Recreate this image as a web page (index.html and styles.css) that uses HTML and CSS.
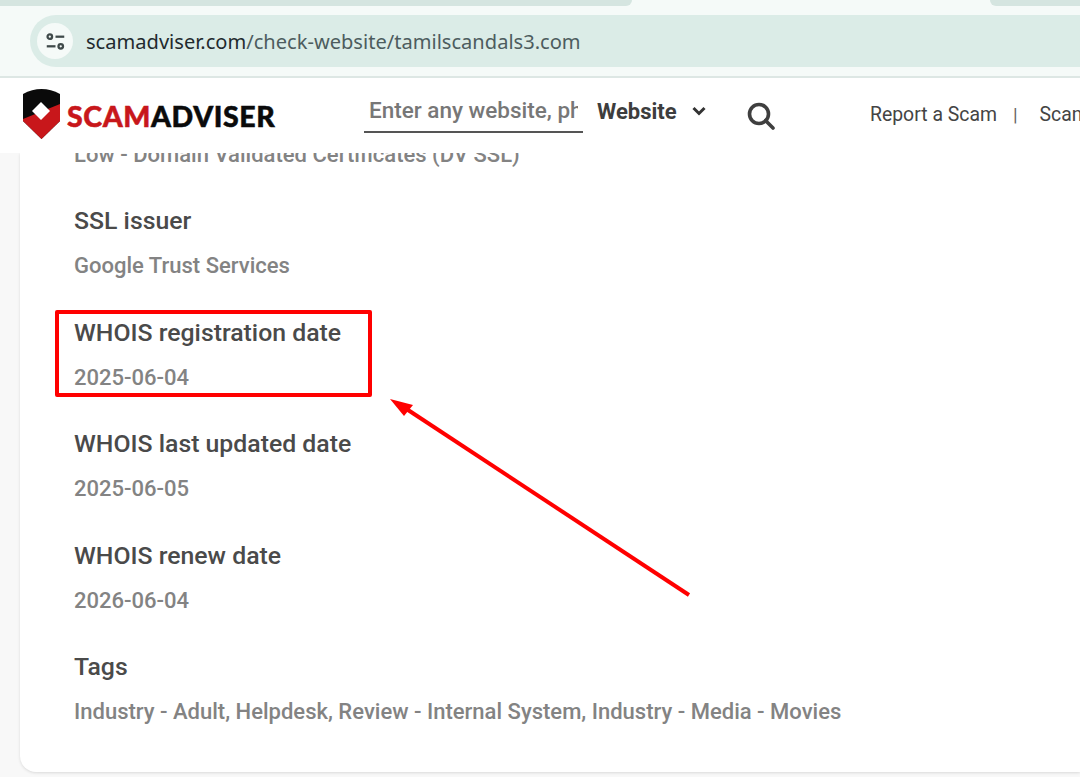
FILE: index.html
```html
<!DOCTYPE html>
<html lang="en">
<head>
<meta charset="utf-8">
<title>ScamAdviser</title>
<link rel="stylesheet" href="styles.css">
</head>
<body>
<div class="chrome">
  <div class="tabstrip">
    <div class="tab-off tab-left"></div>
    <div class="tab-on"></div>
    <div class="tab-off tab-right"></div>
  </div>
  <div class="toolbar">
    <div class="omnibox">
      <span class="site-info">
        <svg width="21" height="21" viewBox="0 0 24 24" fill="none" stroke="#3f4a4a" stroke-width="2.600">
          <circle cx="5.500" cy="6.500" r="2.600"/><path d="M12 6.500h10"/>
          <circle cx="18" cy="17.500" r="2.600"/><path d="M2 17.500h10"/>
        </svg>
      </span>
      <span class="url"><span class="url-host">scamadviser.com</span>/check-website/tamilscandals3.com</span>
    </div>
  </div>
</div>
<header class="site-header">
  <div class="logo">
    <svg class="shield" width="38" height="50" viewBox="0 0 38 50">
      <path d="M0 5Q9 0 18.500 0Q28 0 37 5V32L18.500 50L0 32Z" fill="#0a0a0a"/>
      <path d="M37 15V32L18.500 50L0 32V30Z" fill="#c8171b"/>
      <path d="M18 13L27 22L18 31L9 22Z" fill="#fff"/>
    </svg>
    <span class="wordmark"><span class="word-red">SCAM</span>ADVISER</span>
  </div>
  <div class="search-input"><span class="placeholder">Enter any website, phone, email</span></div>
  <div class="search-type">Website
    <svg width="14" height="10" viewBox="0 0 14 10" fill="none" stroke="#333" stroke-width="3"><path d="M1.500 2l5.500 5.500 5.500-5.500"/></svg>
  </div>
  <svg class="search-icon" width="28" height="28" viewBox="0 0 28 28" fill="none" stroke="#3f3f3f" stroke-width="3.600">
    <circle cx="12" cy="12" r="9.500"/><path d="M18.500 18.500l7.500 7.500" stroke-linecap="round"/>
  </svg>
  <nav class="nav-links">
    <span>Report a Scam</span><span class="nav-sep">|</span><span>Scam Check</span>
  </nav>
</header>
<main class="page">
  <section class="card">
    <div class="clipped"><p class="value">Low - Domain Validated Certificates (DV SSL)</p></div>
    <div class="row"><h3 class="label">SSL issuer</h3><p class="value">Google Trust Services</p></div>
    <div class="row"><h3 class="label">WHOIS registration date</h3><p class="value">2025-06-04</p></div>
    <div class="row"><h3 class="label">WHOIS last updated date</h3><p class="value">2025-06-05</p></div>
    <div class="row"><h3 class="label">WHOIS renew date</h3><p class="value">2026-06-04</p></div>
    <div class="row"><h3 class="label">Tags</h3><p class="value">Industry - Adult, Helpdesk, Review - Internal System, Industry - Media - Movies</p></div>
  </section>
  <div class="mark-box"></div>
  <svg class="mark-arrow" width="310" height="205" viewBox="0 0 310 205">
    <path d="M299 197L15 10" stroke="#ff0000" stroke-width="4" fill="none"/>
    <path d="M0 1L23 7L14 18Z" fill="#ff0000"/>
  </svg>
</main>
</body>
</html>
```
FILE: styles.css
```css
* { box-sizing: border-box; }
html, body { margin: 0; height: 100%; }
body {
  width: 1080px;
  height: 777px;
  overflow: hidden;
  background: #f8f8f8;
  display: flex;
  flex-direction: column;
  font-family: Roboto, "Liberation Sans", sans-serif;
}
.chrome { height: 78px; background: #f5faf8; border-bottom: 2px solid #dde7e4; flex: none; }
.tabstrip { display: flex; height: 6px; }
.tab-off { background: #d5e5e0; height: 6px; }
.tab-left { width: 632px; border-bottom-right-radius: 10px; }
.tab-on { width: 358px; }
.tab-right { flex: 1; border-bottom-left-radius: 10px; }
.toolbar { padding: 9px 0 0 30px; }
.omnibox {
  height: 52px;
  background: #dbece7;
  border-radius: 26px 0 0 26px;
  display: flex;
  align-items: center;
  padding-left: 7px;
}
.site-info {
  width: 36px;
  height: 36px;
  border-radius: 50%;
  background: #f5faf8;
  display: flex;
  align-items: center;
  justify-content: center;
  margin-right: 13px;
}
.url { font-family: "Noto Sans", sans-serif; font-size: 20.080px; color: #4d5c5e; white-space: nowrap; }
.url-host { color: #1f2a2e; }

.site-header {
  height: 75px;
  flex: none;
  background: #fff;
  display: flex;
  align-items: center;
  overflow: hidden;
  padding-left: 23px;
  white-space: nowrap;
  position: relative;
  z-index: 2;
}
.logo { display: flex; align-items: center; width: 341px; flex: none; }
.shield { flex: none; margin: 0 6px 4px 0; }
.wordmark { font-family: Lato, sans-serif; font-weight: 900; font-size: 28.500px; letter-spacing: 0.600px; color: #0b0b0b; -webkit-text-stroke: 0.500px currentColor; }
.word-red { color: #c8171b; }
.search-input { width: 219px; height: 40px; border-bottom: 2px solid #555; overflow: hidden; flex: none; padding: 0 5px; margin-bottom: 6px; }
.placeholder { display: block; width: 209px; overflow: hidden; font-size: 22.500px; font-weight: 500; line-height: 34px; color: #777; }
.search-type { width: 164px; flex: none; padding-left: 14px; font-size: 22px; font-weight: 700; color: #3d3d3d; display: flex; align-items: center; gap: 15px; margin-bottom: 9px; }
.search-icon { flex: none; margin: 0 95px 0 0; }
.nav-links { display: flex; font-size: 19.400px; color: #444; align-items: center; margin-bottom: 2px; }
.nav-sep { color: #666; margin: 0 22px 0 16px; font-size: 19px; }

.page { position: relative; flex: 1; min-height: 0; padding: 0 0 5px 20px; }
.card {
  height: 100%;
  background: #fff;
  border-radius: 0 0 0 16px;
  box-shadow: 0 1px 3px rgba(0,0,0,.12);
  padding-left: 54px;
  overflow: hidden;
}
.clipped { height: 19px; overflow: hidden; display: flex; align-items: flex-end; margin-bottom: 32px; }
.row { height: 111.500px; }
.label { margin: 0; font-size: 24.800px; font-weight: 500; line-height: 34px; color: #4a4a4a; }
.value { margin: 11px 0 0; font-size: 22.030px; font-weight: 500; line-height: 34px; color: #838383; white-space: nowrap; }
.clipped .value { margin: 0; }
.mark-box { position: absolute; left: 55px; top: 157px; width: 317px; height: 87px; border: 4px solid #ff0000; border-radius: 2px; }
.mark-arrow { position: absolute; left: 390px; top: 245px; }
```
